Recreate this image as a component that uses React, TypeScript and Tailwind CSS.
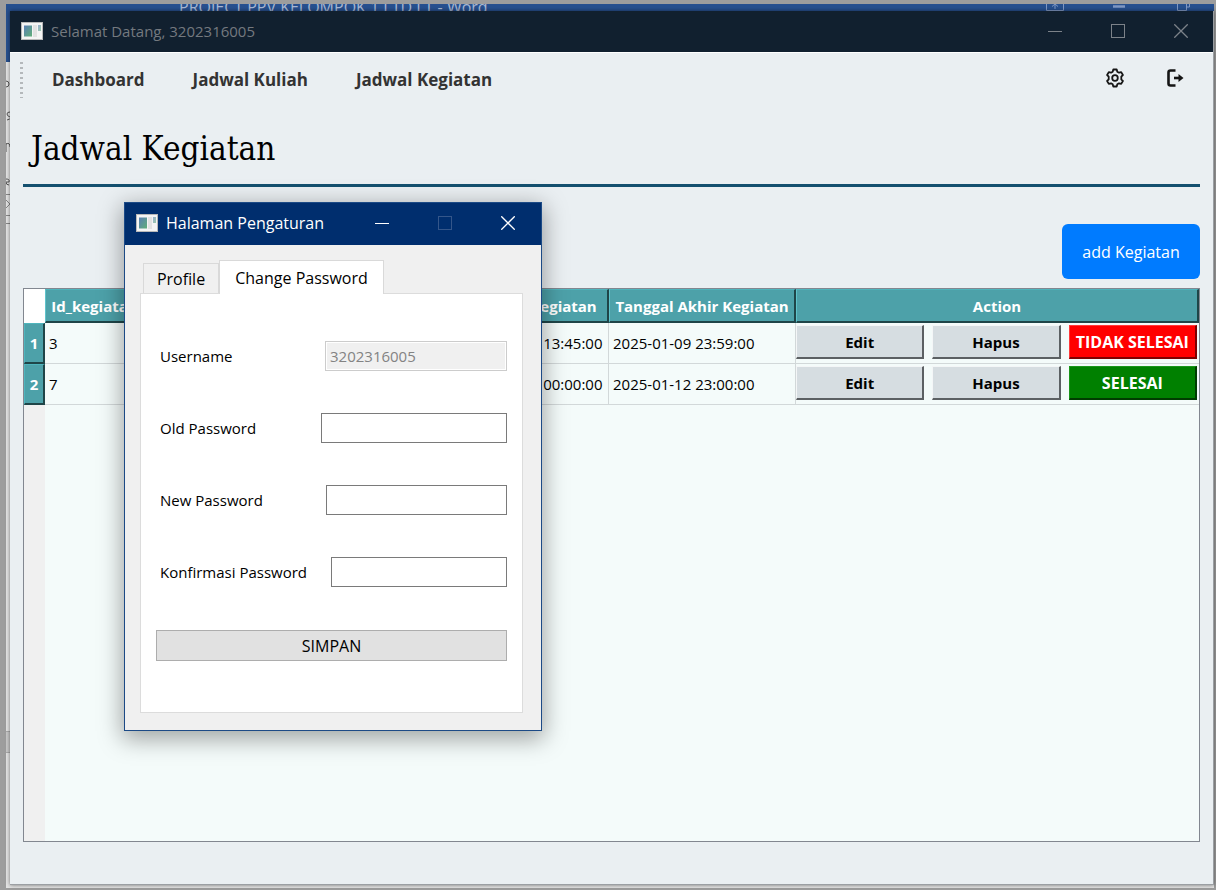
import React from "react";

function AppIcon() {
  return (
    <svg viewBox="0 0 22 18" className="h-[18px] w-[22px] shrink-0" aria-hidden="true">
      <defs>
        <linearGradient id="pane" x1="0" y1="0" x2="1" y2="1">
          <stop offset="0" stopColor="#5b7fb5" />
          <stop offset="1" stopColor="#5fae78" />
        </linearGradient>
      </defs>
      <rect x="0.5" y="0.5" width="21" height="17" fill="#f4f4f4" stroke="#b9b9b9" />
      <rect x="3" y="3.5" width="8" height="11" fill="url(#pane)" />
      <rect x="12" y="3" width="4" height="12" fill="#e2e2e2" />
      <rect x="17" y="3" width="3" height="6" fill="url(#pane)" opacity="0.6" />
    </svg>
  );
}

type CaptionProps = { muted: string; maxClass: string; box: string };

function CaptionButtons({ muted, maxClass, box }: CaptionProps) {
  return (
    <div className={"flex h-full items-center " + muted}>
      <button aria-label="Minimize" className={"flex h-full items-center justify-center " + box}>
        <svg viewBox="0 0 14 14" className="size-3.5" stroke="currentColor" fill="none">
          <path d="M0 7.5h14" />
        </svg>
      </button>
      <button aria-label="Maximize" className={"flex h-full items-center justify-center " + box + " " + maxClass}>
        <svg viewBox="0 0 14 14" className="size-3.5" stroke="currentColor" fill="none">
          <rect x="0.5" y="0.5" width="13" height="13" />
        </svg>
      </button>
      <button aria-label="Close" className={"flex h-full items-center justify-center " + box}>
        <svg viewBox="0 0 14 14" className="size-3.5" stroke="currentColor" strokeWidth="1.3" fill="none">
          <path d="M0.3 0.3l13.4 13.4M13.7 0.3L0.3 13.7" />
        </svg>
      </button>
    </div>
  );
}

const th =
  "h-[34px] border-t border-l border-r-2 border-b-2 border-t-[#4fb5bd] border-l-[#5fc3cb] border-r-[#1f4548] border-b-[#1f4548] bg-[#4da1a9] p-0 text-center font-bold text-white whitespace-nowrap";
const rowHead =
  "border-t border-l border-r-2 border-b-2 border-t-[#4fb5bd] border-l-[#4fb5bd] border-r-[#1f4548] border-b-[#1f4548] bg-[#4da1a9] p-0 text-center font-bold text-white";
const td = "border-r border-b border-[#d2d8d9] px-1 py-0 whitespace-nowrap";
const grayBtn =
  "h-[34px] flex-1 border border-r-2 border-b-2 border-t-[#f4f6f7] border-l-[#f4f6f7] border-r-[#5c6063] border-b-[#5c6063] bg-[#d6dde1] text-center font-bold text-black";

const rows = [
  { no: 1, id: 3, start: "2025-01-09 13:45:00", end: "2025-01-09 23:59:00", done: false },
  { no: 2, id: 7, start: "2025-01-12 00:00:00", end: "2025-01-12 23:00:00", done: true },
];

function KegiatanTable() {
  return (
    <table className="w-full table-fixed border-separate border-spacing-0 text-[15px] leading-5">
      <colgroup>
        <col className="w-[21px]" />
        <col className="w-[100px]" />
        <col />
        <col className="w-[152px]" />
        <col className="w-[187px]" />
        <col className="w-[403px]" />
      </colgroup>
      <thead>
        <tr>
          <th className="bg-white p-0" />
          <th className={th}>Id_kegiatan</th>
          <th className={th} />
          <th className={th}>Tanggal Kegiatan</th>
          <th className={th}>Tanggal Akhir Kegiatan</th>
          <th className={th}>Action</th>
        </tr>
      </thead>
      <tbody>
        {rows.map((r) => (
          <tr key={r.no} className="h-[41px]">
            <th scope="row" className={rowHead}>{r.no}</th>
            <td className={td}>{r.id}</td>
            <td className={td} />
            <td className={td}>{r.start}</td>
            <td className={td}>{r.end}</td>
            <td className="border-b border-[#d2d8d9] p-0 pr-0.5 pb-0.5">
              <div className="flex items-center gap-2">
                <button className={grayBtn}>Edit</button>
                <button className={grayBtn}>Hapus</button>
                {r.done ? (
                  <button className="h-[34px] flex-1 border border-r-2 border-b-2 border-t-[#1a951a] border-l-[#1a951a] border-r-[#003c00] border-b-[#003c00] bg-[#008000] text-center text-[16px] font-bold text-white">
                    SELESAI
                  </button>
                ) : (
                  <button className="h-[34px] flex-1 border border-r-2 border-b-2 border-t-[#ff3b3b] border-l-[#ff3b3b] border-r-[#7d0000] border-b-[#7d0000] bg-[#ff0000] text-center text-[16px] font-bold whitespace-nowrap text-white">
                    TIDAK SELESAI
                  </button>
                )}
              </div>
            </td>
          </tr>
        ))}
      </tbody>
    </table>
  );
}

const label = "text-[15px] leading-5 whitespace-nowrap";
const field = "h-[30px] border border-[#7a7a7a] bg-white px-1 text-[15px] outline-none";

function SettingsDialog() {
  return (
    <section
      aria-label="Halaman Pengaturan"
      className="absolute top-[191px] left-[114px] z-10 flex w-[418px] flex-col border border-[#1c4a86] bg-[#f0f0f0] text-black shadow-[0_6px_22px_2px_rgba(0,0,0,0.35)]"
    >
      <header className="flex h-[42px] items-center bg-[#002e6e] pr-0.5 pb-0.5 pl-[11px] text-white">
        <AppIcon />
        <h2 className="ml-2 flex-1 text-[16px] leading-5 whitespace-nowrap">Halaman Pengaturan</h2>
        <CaptionButtons muted="text-white" maxClass="text-[#34568a]" box="w-[63px]" />
      </header>
      <div className="pt-[15px] pr-[18px] pb-[17px] pl-[15px]">
        <div role="tablist" className="flex items-end pl-[3px] text-[16px] leading-5">
          <button role="tab" aria-selected="false" className="h-[30px] w-[76px] border border-b-0 border-[#d9d9d9] bg-[#f0f0f0]">
            Profile
          </button>
          <button role="tab" aria-selected="true" className="relative -mb-px h-[34px] w-[165px] border border-b-0 border-[#d9d9d9] bg-white">
            Change Password
          </button>
        </div>
        <form className="flex h-[420px] flex-col border border-[#dcdcdc] bg-white px-[15px] pt-[47px]">
          <div className="flex flex-col gap-[42px] pl-1">
            <div className="flex items-center justify-between">
              <label htmlFor="username" className={label}>Username</label>
              <input
                id="username"
                disabled
                defaultValue="3202316005"
                className="h-[30px] w-[182px] border border-[#cccccc] bg-[#f0f0f0] px-1 text-[15px] text-[#838383] shadow-[inset_0_0_0_1px_#ffffff]"
              />
            </div>
            <div className="flex items-center justify-between">
              <label htmlFor="old" className={label}>Old Password</label>
              <input id="old" type="password" className={field + " w-[186px]"} />
            </div>
            <div className="flex items-center justify-between">
              <label htmlFor="new" className={label}>New Password</label>
              <input id="new" type="password" className={field + " w-[181px]"} />
            </div>
            <div className="flex items-center justify-between">
              <label htmlFor="confirm" className={label}>Konfirmasi Password</label>
              <input id="confirm" type="password" className={field + " w-[176px]"} />
            </div>
          </div>
          <button type="button" className="mt-[43px] h-[31px] border border-[#adadad] bg-[#e1e1e1] text-[16px] leading-5">
            SIMPAN
          </button>
        </form>
      </div>
    </section>
  );
}

function WordBackdrop() {
  return (
    <div aria-hidden="true" className="absolute inset-0 overflow-hidden bg-[#e3e3e3] text-[#333333]">
      <div className="h-[58px] bg-[#27508f]">
        <div className="flex h-[7px] items-start justify-between overflow-hidden pr-[22px] pl-[173px] text-[16px] leading-[7px] text-[#a9b9d4]">
          <span className="whitespace-pre">PROJECT PPV KELOMPOK 1 LTD LT - Word</span>
          <svg viewBox="0 0 146 7" className="h-[7px] w-[146px]" fill="none" stroke="#8199c4">
            <path d="M0.500 0v6.500h17v-6.500M9 0v5M6 2.500l3-2.500l3 2.500M131.500 0v6.500h9v-6.500M140.500 3h3v-3" />
            <path d="M67 2.500h12" strokeWidth="2.500" />
          </svg>
        </div>
      </div>
      <svg viewBox="0 0 4 180" className="h-[180px] w-1" fill="none" stroke="#555">
        <path d="M0 19q3 0 3 3t-3 3M4 50q-3 0-3 2t3 3t-3 3M0 81v9M0 82q4-2 4 3M0 117q4 0 3 3h-3q0 3 3 3" />
        <path d="M0 132.500h4M0 138l4 4-4 4M0 153.500h4M0 161.500h4" stroke="#888" />
      </svg>
      <div className="mt-[489px] h-[22px] w-1 border-y border-[#aaaaaa] bg-[#c8c8c8]" />
    </div>
  );
}

export default function App() {
  return (
    <div className="flex min-h-screen flex-col bg-[#9d9d9d] pt-1 pr-0.5 pb-0.5 pl-1.5 font-['Open_Sans','Noto_Sans',sans-serif]">
      <div className="relative flex flex-1 flex-col pt-[7px] pb-[3px] pl-1">
        <WordBackdrop />
        <main className="relative flex flex-1 flex-col border-r border-b border-[#9b9fa3] bg-[#eaeff2] text-black shadow-[0_0_4px_rgba(0,0,0,0.5)]">
          <header className="flex h-[41px] items-center bg-[#11202f] pr-px pb-0.5 pl-[11px] text-[#74797f]">
            <AppIcon />
            <span className="ml-2 flex-1 text-[15px] leading-5">Selamat Datang, 3202316005</span>
            <CaptionButtons muted="text-[#7c8289]" maxClass="" box="w-[63px]" />
          </header>
          <nav className="flex h-[55px] items-center border-t border-white pl-[10px]">
            <div className="h-[36px] w-[3px] bg-[repeating-linear-gradient(180deg,#b4b8bb_0_2px,transparent_2px_5px)]" />
            <div className="ml-[29px] flex flex-1 items-center gap-12 text-[17px] leading-6 font-bold text-[#333333]">
              <a href="#dashboard">Dashboard</a>
              <a href="#kuliah">Jadwal Kuliah</a>
              <a href="#kegiatan">Jadwal Kegiatan</a>
            </div>
            <div className="flex items-center gap-10 pr-7 pb-1 text-[#151515]">
              <button aria-label="Pengaturan">
                <svg viewBox="0 0 20 20" className="size-5" fill="none" stroke="currentColor" strokeWidth="1.8" strokeLinejoin="round">
                  <path d="M8.300 1.500h3.400l.6 2.200 1.700 1 2.200-.6 1.700 2.900-1.600 1.600v2.800l1.600 1.600-1.700 2.900-2.200-.6-1.700 1-.6 2.200H8.300l-.6-2.200-1.700-1-2.200.6-1.700-2.900 1.600-1.600V8.600L2.100 7l1.700-2.900 2.200.6 1.700-1z" />
                  <circle cx="10" cy="10" r="2.800" />
                </svg>
              </button>
              <button aria-label="Keluar">
                <svg viewBox="0 0 20 20" className="size-5" fill="none" stroke="currentColor" strokeWidth="2.600">
                  <path d="M10.500 2.500H5.500Q3.500 2.500 3.500 4.500v11Q3.500 17.500 5.500 17.500h5" />
                  <path d="M9 10h6" />
                  <path d="M13.500 6l5 4-5 4z" fill="currentColor" stroke="none" />
                </svg>
              </button>
            </div>
          </nav>
          <div className="flex flex-1 flex-col pr-[13px] pb-[42px] pl-[13px]">
            <h1 className="border-b-[3px] border-[#14506f] pt-[22px] pb-[15px] pl-2 font-['DejaVu_Serif_Condensed','DejaVu_Serif',serif] text-[33px] leading-10">
              Jadwal Kegiatan
            </h1>
            <button className="mt-[37px] h-[55px] w-[138px] self-end rounded-md bg-[#007bff] text-[16px] leading-6 text-white">
              add Kegiatan
            </button>
            <div className="mt-[9px] flex flex-1 flex-col border border-[#828790] bg-[#f4fbfa]">
              <KegiatanTable />
              <div className="w-[21px] flex-1 bg-[#f0f0f0]" />
            </div>
          </div>
          <SettingsDialog />
        </main>
      </div>
    </div>
  );
}
